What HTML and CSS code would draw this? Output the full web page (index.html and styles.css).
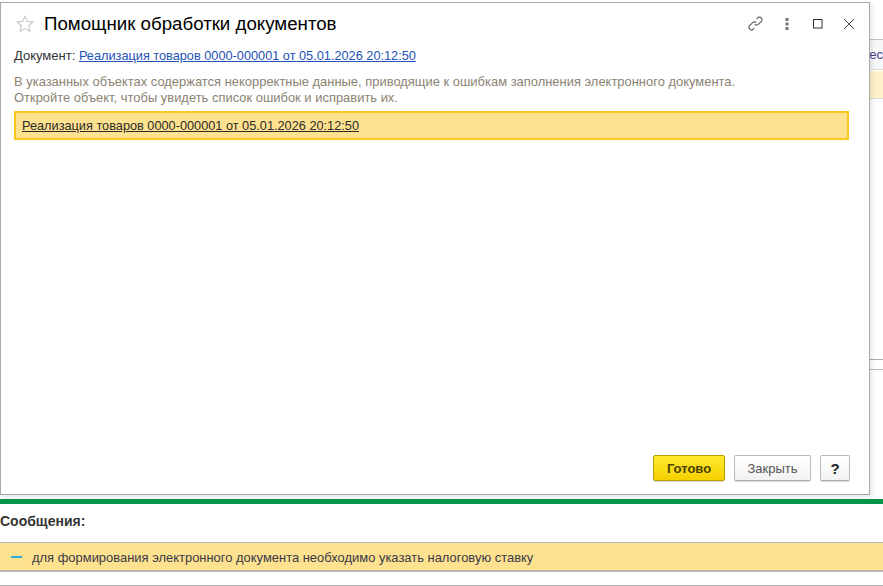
FILE: index.html
```html
<!DOCTYPE html>
<html lang="ru">
<head>
<meta charset="utf-8">
<title>Помощник обработки документов</title>
<link rel="stylesheet" href="styles.css">
</head>
<body>
<div class="app">
  <div class="workspace">
    <div class="backdrop">
      <div class="bg-head">нес</div>
      <div class="bg-row"></div>
      <div class="bg-line1"></div>
      <div class="bg-line2"></div>
    </div>
    <section class="window">
      <header class="titlebar">
        <svg class="star" width="18" height="18" viewBox="0 0 18 18"><path d="M9 1.2l2.3 5.2 5.6.6-4.2 3.8 1.2 5.6L9 13.6l-4.9 2.8 1.2-5.6L1.1 7l5.6-.6z" fill="#fff" stroke="#c4c8cc" stroke-width="1.1"/></svg>
        <h1 class="title">Помощник обработки документов</h1>
        <div class="tools">
          <svg class="tool-link" width="17" height="17" viewBox="0 0 17 17" fill="none" stroke="#666" stroke-width="1.2"><path d="M9.6 3.9l1.5-1.5a2.7 2.7 0 0 1 3.6 3.7l-3.1 3.1a2.7 2.7 0 0 1-3.8 0"/><path d="M7.4 13.1l-1.5 1.5a2.7 2.7 0 0 1-3.6-3.7l3.1-3.1a2.7 2.7 0 0 1 3.8 0"/></svg>
          <svg class="tool-more" width="4" height="14" viewBox="0 0 4 14" fill="#777"><rect x="0.5" y="1" width="3" height="3"/><rect x="0.5" y="5.5" width="3" height="3"/><rect x="0.5" y="10" width="3" height="3"/></svg>
          <svg class="tool-max" width="10" height="10" viewBox="0 0 10 10" fill="none" stroke="#333" stroke-width="1"><rect x="0.5" y="0.5" width="8.5" height="8.5"/></svg>
          <svg class="tool-close" width="12" height="12" viewBox="0 0 12 12" fill="none" stroke="#444" stroke-width="1"><path d="M1 1l10 10M11 1L1 11"/></svg>
        </div>
      </header>
      <div class="doc-line">Документ: <a class="doc-link" href="#">Реализация товаров 0000-000001 от 05.01.2026 20:12:50</a></div>
      <p class="notice">В указанных объектах содержатся некорректные данные, приводящие к ошибкам заполнения электронного документа.<br>Откройте объект, чтобы увидеть список ошибок и исправить их.</p>
      <div class="selected-row"><a class="row-link" href="#">Реализация товаров 0000-000001 от 05.01.2026 20:12:50</a></div>
      <footer class="actions">
        <button class="btn btn-primary">Готово</button>
        <button class="btn btn-close">Закрыть</button>
        <button class="btn btn-help">?</button>
      </footer>
    </section>
  </div>
  <div class="messages">
    <div class="messages-title">Сообщения:</div>
    <div class="message"><span class="dash"></span><span>для формирования электронного документа необходимо указать налоговую ставку</span></div>
    <div class="msg-end"></div>
  </div>
</div>
</body>
</html>
```
FILE: styles.css
```css
* { box-sizing: border-box; }
html, body { margin: 0; padding: 0; background: #fff; }
body { font-family: "Liberation Sans", Arial, sans-serif; font-size: 13px; color: #333; overflow: hidden; }
.app { width: 883px; height: 586px; display: flex; flex-direction: column; overflow: hidden; }
.workspace { position: relative; height: 499px; flex: none; }
.backdrop { position: absolute; inset: 0; background: #fff; }
.bg-head { position: absolute; top: 39px; right: 0; width: 40px; height: 31px; background: #f7f7f7; border-top: 1px solid #c4c4c4; border-bottom: 1px solid #ddd; font-size: 13px; line-height: 29px; color: #4b3f8f; text-align: right; white-space: nowrap; overflow: hidden; }
.bg-row { position: absolute; top: 71px; right: 0; width: 40px; height: 28px; background: #fdf2c8; border-bottom: 1px solid #ddd; }
.bg-line1 { position: absolute; top: 359px; right: 0; width: 40px; height: 1px; background: #aaa; }
.bg-line2 { position: absolute; top: 369px; right: 0; width: 40px; height: 1px; background: #bbb; }
.window { position: absolute; left: 0; top: 2px; width: 870px; height: 493px; background: #fff; border: 1px solid #a8a8a8; box-shadow: 2px 2px 5px rgba(0,0,0,.1); display: flex; flex-direction: column; padding: 0 19px 0 13px; }
.titlebar { display: flex; align-items: center; height: 41px; flex: none; }
.star { margin-left: 2px; flex: none; }
.title { margin: 0 0 0 10px; font-size: 18.7px; font-weight: 400; color: #000; white-space: nowrap; }
.tools { margin-left: auto; margin-right: -5px; display: flex; align-items: center; }
.tool-link { margin-right: 21px; }
.tool-more { margin-right: 24px; }
.tool-max { margin-right: 20px; }
.doc-line { margin-top: 4px; height: 16px; line-height: 16px; color: #333; white-space: nowrap; }
.doc-link { color: #2252b5; text-decoration: underline; font-size: 12.74px; }
.notice { margin: 10px 0 0; line-height: 16px; font-size: 12.95px; color: #8c8372; white-space: nowrap; }
.selected-row { margin-top: 5px; height: 29px; margin-right: 1px; background: #fee28f; border: 2px solid #fbc81e; padding-left: 6px; line-height: 26px; font-size: 12.74px; }
.row-link { color: #2b2b2b; text-decoration: underline; }
.actions { margin-top: auto; margin-bottom: 13px; display: flex; justify-content: flex-end; gap: 9px; }
.btn { height: 26px; font-family: inherit; font-size: 13px; padding: 0; border-radius: 2px; border: 1px solid #bbb; border-bottom-color: #aaa; background: linear-gradient(#fff, #f2f2f2); color: #555; box-shadow: 0 1px 1px rgba(0,0,0,.15); }
.btn-primary { width: 72px; background: linear-gradient(#ffe92e, #f6d000); border-color: #b8a000; color: #4a4000; font-weight: 700; }
.btn-close { width: 77px; }
.btn-help { width: 30px; color: #222; font-size: 15px; font-weight: 700; }
.messages { border-top: 5px solid #00964a; flex: 1; }
.messages-title { height: 38px; line-height: 34px; font-size: 14px; font-weight: 700; color: #333; }
.message { height: 30px; background: #fee28f; border-top: 1px solid #b5b5b5; border-bottom: 2px solid #b5b5b5; display: flex; align-items: center; gap: 10px; padding: 1px 0 0 11px; font-size: 12.95px; color: #3a3a4a; }
.dash { width: 11px; height: 2px; background: #2fa8dc; flex: none; }
.msg-end { margin-top: 13px; height: 1px; background: #b5b5b5; }
```
